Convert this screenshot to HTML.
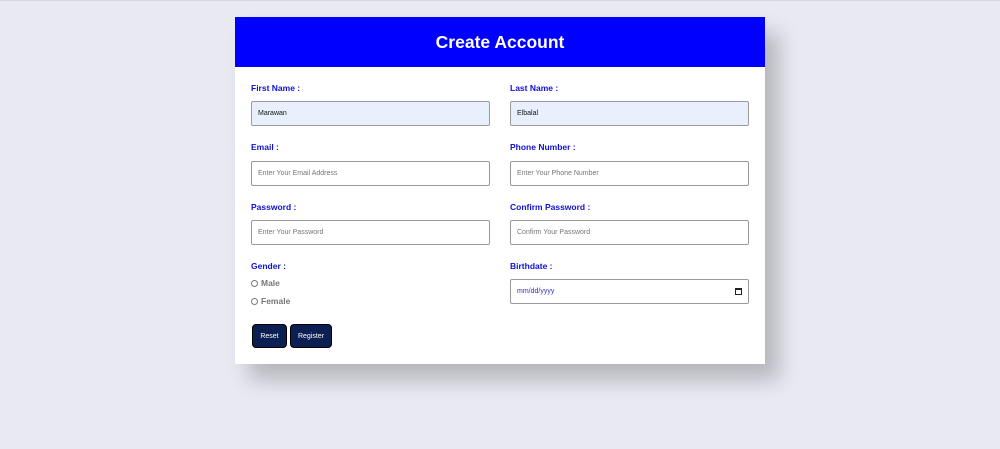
<!DOCTYPE html>
<html><head><style>
*{box-sizing:border-box;margin:0;padding:0}
body{width:1000px;height:449px;background:#e9e9f2;font-family:"Liberation Sans",Arial,sans-serif;position:relative;overflow:hidden}
.top{position:absolute;left:0;top:0;width:1000px;height:1px;background:#d8d8e0}
.card{position:absolute;left:235px;top:17px;width:530px;height:347px;background:#fff;box-shadow:14px 16px 20px rgba(0,0,0,.22)}
.hd{height:50px;background:#0000ff;color:#fff;font-weight:bold;font-size:17.5px;text-align:center;line-height:50px}
.lbl{position:absolute;color:#1010d0;font-weight:bold;font-size:8.5px}
.in{position:absolute;width:239px;height:25px;border:1px solid #9a9a9a;border-radius:2px;font-size:7px;color:#777;padding-left:6px;line-height:23px;background:#fff}
.f{background:#e8f0fe;color:#111}
.r{position:absolute;font-size:8.5px;font-weight:bold;color:#777;left:16px}
.r i{display:inline-block;width:7px;height:7px;border:1px solid #777;border-radius:50%;margin-right:3px;vertical-align:-1px}
.b{position:absolute;top:307px;height:24px;background:#0b1f52;color:#fff;font-size:7px;border-radius:4px;text-align:center;line-height:24px;border:1px solid #000}
</style></head><body>
<div class="top"></div>
<div class="card">
<div class="hd">Create Account</div>
<div class="lbl" style="left:16px;top:66px">First Name :</div>
<div class="lbl" style="left:275px;top:66px">Last Name :</div>
<div class="in f" style="left:16px;top:84px">Marawan</div>
<div class="in f" style="left:275px;top:84px">Elbalal</div>
<div class="lbl" style="left:16px;top:125px">Email :</div>
<div class="lbl" style="left:275px;top:125px">Phone Number :</div>
<div class="in" style="left:16px;top:144px">Enter Your Email Address</div>
<div class="in" style="left:275px;top:144px">Enter Your Phone Number</div>
<div class="lbl" style="left:16px;top:185px">Password :</div>
<div class="lbl" style="left:275px;top:185px">Confirm Password :</div>
<div class="in" style="left:16px;top:203px">Enter Your Password</div>
<div class="in" style="left:275px;top:203px">Confirm Your Password</div>
<div class="lbl" style="left:16px;top:244px">Gender :</div>
<div class="lbl" style="left:275px;top:244px">Birthdate :</div>
<div class="r" style="top:261px"><i></i>Male</div>
<div class="r" style="top:279px"><i></i>Female</div>
<div class="in" style="left:275px;top:262px;color:#3030c0">mm/dd/yyyy<span style="position:absolute;right:6px;top:8px;width:7px;height:7px;border:1px solid #222;border-top-width:2px"></span></div>
<div class="b" style="left:17px;width:35px">Reset</div>
<div class="b" style="left:55px;width:42px">Register</div>
</div>
</body></html>
